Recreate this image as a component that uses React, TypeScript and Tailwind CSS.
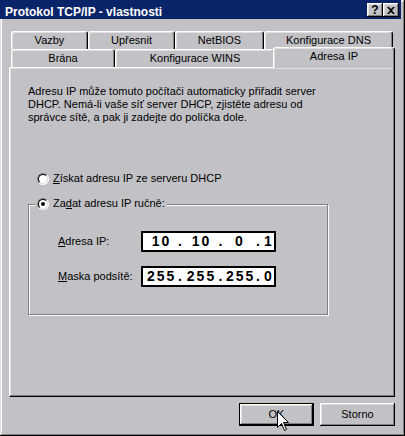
import type { ReactNode } from "react";

const row1 = [
  { label: "Vazby", width: "w-[77px]" },
  { label: "Upřesnit", width: "w-[87px]" },
  { label: "NetBIOS", width: "w-[89px]" },
  { label: "Konfigurace DNS", width: "w-[129px]" },
];

const raised =
  "bg-[#c2c2c6] shadow-[inset_-1px_-1px_#000,inset_1px_1px_#fff,inset_-2px_-2px_#808080,inset_2px_2px_#dfdfdf]";

const Tab = ({ label, width, selected }: { label: string; width: string; selected?: boolean }) => (
  <div
    className={`flex shrink-0 justify-center rounded-t-[3px] border-l border-r border-t border-l-white border-r-black border-t-white bg-[#c2c2c6] leading-[16px] shadow-[inset_-1px_0_#808080,inset_1px_1px_#dfdfdf] ${width} ${
      selected ? "relative z-10 -mx-[2px] -mb-[1px] h-[21px]" : "h-[18px]"
    }`}
  >
    {label}
  </div>
);

const Radio = ({ checked }: { checked?: boolean }) => (
  <span className="flex h-[12px] w-[12px] shrink-0 items-center justify-center rounded-full border border-b-white border-l-[#808080] border-r-white border-t-[#808080]">
    <span className="flex h-[10px] w-[10px] items-center justify-center rounded-full border border-b-[#dfdfdf] border-l-black border-r-[#dfdfdf] border-t-black bg-white">
      {checked && <span className="h-[4px] w-[4px] rounded-full bg-black" />}
    </span>
  </span>
);

// IP control: octets sit in fixed cells, dots between them
const IpField = ({ octets }: { octets: string[] }) => {
  const cells = ["w-[31px]", "w-[33px]", "w-[30px]", "w-[12px]"];
  const dots = ["w-[8px]", "w-[7px]", "w-[8px]"];
  const parts: ReactNode[] = [];
  octets.forEach((o, i) => {
    parts.push(
      <span key={`o${i}`} className={`${cells[i]} shrink-0 pl-[2px] text-center tracking-[2px]`}>
        {o}
      </span>
    );
    if (i < 3)
      parts.push(
        <span key={`d${i}`} className={`${dots[i]} shrink-0 text-center`}>
          .
        </span>
      );
  });
  return (
    <div className="flex h-[21px] w-[135px] items-center border-2 border-black bg-white pl-[2px] text-[14px] font-bold leading-[17px]">
      {parts}
    </div>
  );
};

export default function App() {
  return (
    <div className="relative h-[436px] w-[405px] overflow-hidden bg-[#c2c2c6] font-['Liberation_Sans',Arial,sans-serif] text-[11px] text-black shadow-[inset_-1px_-1px_#000,inset_1px_1px_#dfdfdf,inset_-2px_-2px_#808080,inset_2px_2px_#fff]">
      {/* Title bar */}
      <div className="flex h-[19px] w-[401px] items-start justify-between bg-[#0a246a] pl-[5px] pr-[2px]">
        <span className="whitespace-nowrap pt-[5px] text-[12px] font-bold leading-[14px] text-white">
          Protokol TCP/IP - vlastnosti
        </span>
        <div className="mt-[3px] flex">
          <div className={`flex h-[14px] w-[16px] items-center justify-center text-[12px] font-bold leading-none ${raised}`}>
            ?
          </div>
          <div className={`flex h-[14px] w-[16px] items-center justify-center ${raised}`}>
            <svg width="8" height="7" viewBox="0 0 8 7">
              <path d="M0 0h2l2 2 2-2h2L5 3.5 8 7H6L4 5 2 7H0l3-3.5z" fill="#000" />
            </svg>
          </div>
        </div>
      </div>

      {/* Tabs */}
      <div className="ml-[11px] mt-[12px] flex h-[18px]">
        {row1.map((t) => (
          <Tab key={t.label} label={t.label} width={t.width} />
        ))}
      </div>
      <div className="ml-[11px] flex h-[18px] items-end">
        <Tab label="Brána" width="w-[104px]" />
        <Tab label="Konfigurace WINS" width="w-[160px]" />
        <Tab label="Adresa IP" width="w-[122px]" selected />
      </div>

      {/* Panel */}
      <div className="ml-[9px] h-[330px] w-[386px] border border-b-black border-l-white border-r-black border-t-white pl-[18px] pt-[17px] shadow-[inset_-1px_-1px_#808080,inset_1px_1px_#dfdfdf]">
        <p className="whitespace-nowrap leading-[13px]">
          Adresu IP může tomuto počítači automaticky přiřadit server
          <br />
          DHCP. Nemá-li vaše síť server DHCP, zjistěte adresu od
          <br />
          správce sítě, a pak ji zadejte do políčka dole.
        </p>

        <div className="ml-[9px] mt-[48px] flex h-[13px] items-center gap-[4px] leading-[13px]">
          <Radio />
          <span className="whitespace-nowrap">
            <u>Z</u>ískat adresu IP ze serveru DHCP
          </span>
        </div>

        <div className="relative mt-[19px] h-[111px] w-[300px] border border-[#808080] pl-[29px] pt-[26px] shadow-[1px_1px_#fff,inset_1px_1px_#fff]">
          <div className="absolute left-[6px] top-[-8px] flex h-[13px] items-center gap-[4px] bg-[#c2c2c6] px-[2px] leading-[13px]">
            <Radio checked />
            <span className="whitespace-nowrap">
              Za<u>d</u>at adresu IP ručně:
            </span>
          </div>

          <div className="flex h-[21px] items-center leading-[13px]">
            <span className="w-[83px] shrink-0">
              <u>A</u>dresa IP:
            </span>
            <IpField octets={["10", "10", "0", "1"]} />
          </div>
          <div className="mt-[14px] flex h-[21px] items-center leading-[13px]">
            <span className="w-[83px] shrink-0 whitespace-nowrap">
              <u>M</u>aska podsítě:
            </span>
            <IpField octets={["255", "255", "255", "0"]} />
          </div>
        </div>
      </div>

      {/* Buttons */}
      <div className="mt-[6px] flex justify-end gap-[6px] pr-[10px]">
        <button className="flex h-[23px] w-[75px] items-center justify-center border border-black bg-[#c2c2c6] shadow-[inset_-1px_-1px_#000,inset_1px_1px_#fff,inset_-2px_-2px_#808080,inset_2px_2px_#dfdfdf]">
          OK
        </button>
        <button className={`flex h-[23px] w-[75px] items-center justify-center ${raised}`}>Storno</button>
      </div>

      {/* Mouse pointer over OK */}
      <svg className="absolute left-[277px] top-[411px]" width="13" height="21" viewBox="0 0 13 21">
        <path d="M0.5 0.5V16.5L4.5 12.5L7.5 19.5L9.5 18.5L6.5 11.5H11.5Z" fill="#fff" stroke="#000" strokeLinejoin="miter" />
      </svg>
    </div>
  );
}
